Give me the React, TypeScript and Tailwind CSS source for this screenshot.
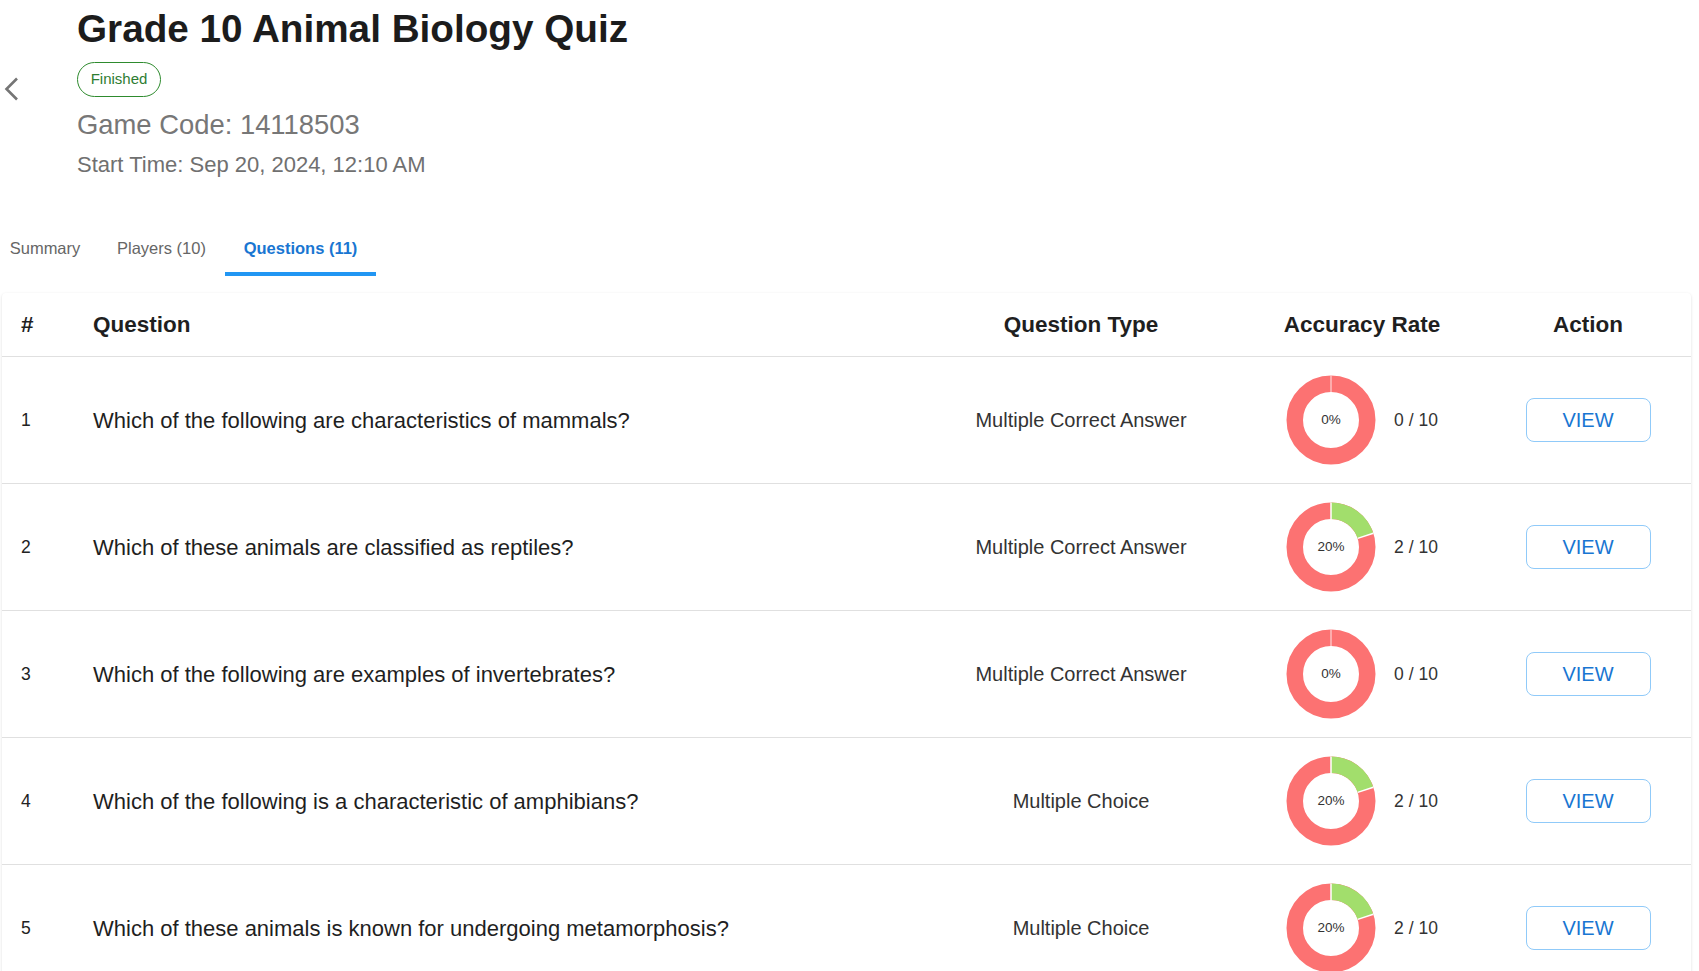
import React from "react";

type Question = {
 id: number;
 text: string;
 type: string;
 correct: number;
 total: number;
};

const questions: Question[] = [
 { id: 1, text: "Which of the following are characteristics of mammals?", type: "Multiple Correct Answer", correct: 0, total: 10 },
 { id: 2, text: "Which of these animals are classified as reptiles?", type: "Multiple Correct Answer", correct: 2, total: 10 },
 { id: 3, text: "Which of the following are examples of invertebrates?", type: "Multiple Correct Answer", correct: 0, total: 10 },
 { id: 4, text: "Which of the following is a characteristic of amphibians?", type: "Multiple Choice", correct: 2, total: 10 },
 { id: 5, text: "Which of these animals is known for undergoing metamorphosis?", type: "Multiple Choice", correct: 2, total: 10 },
];

function Donut({ pct }: { pct: number }) {
 const r = 36.25;
 const c = 2 * Math.PI * r;
 const angle = (pct / 100) * 2 * Math.PI;
 const inner = 28;
 const outer = 44.5;
 const sep = (a: number) => ({
  x1: 45 + inner * Math.sin(a),
  y1: 45 - inner * Math.cos(a),
  x2: 45 + outer * Math.sin(a),
  y2: 45 - outer * Math.cos(a),
 });
 return (
  <div className="relative h-[90px] w-[90px]">
   <svg width="90" height="90" viewBox="0 0 90 90">
    <circle cx="45" cy="45" r={r} fill="none" stroke="#fc7272" strokeWidth="16.5" />
    {pct > 0 && (
     <circle
      cx="45"
      cy="45"
      r={r}
      fill="none"
      stroke="#a2de6c"
      strokeWidth="16.5"
      strokeDasharray={`${(c * pct) / 100} ${c}`}
      transform="rotate(-90 45 45)"
     />
    )}
    <line {...sep(0)} stroke="#ffffff" strokeOpacity={pct > 0 ? 1 : 0.55} strokeWidth="1.5" />
    {pct > 0 && <line {...sep(angle)} stroke="#ffffff" strokeWidth="1.5" />}
   </svg>
   <span className="absolute inset-0 flex items-center justify-center text-[13.5px] text-[#333]">
    {pct}%
   </span>
  </div>
 );
}

function Row({ q }: { q: Question }) {
 const pct = Math.round((q.correct / q.total) * 100);
 return (
  <div className="grid h-[127px] grid-cols-[91px_862px_252px_310px_142px] items-center border-b border-[#e0e0e0] pr-[32px]">
   <div className="pl-[19px] text-[17.5px] text-[#222]">{q.id}</div>
   <div className="text-[22px] text-[#1f1f1f]">{q.text}</div>
   <div className="text-center text-[20px] text-[#333]">{q.type}</div>
   <div className="flex items-center justify-center gap-[18px]">
    <Donut pct={pct} />
    <span className="text-[17.5px] text-[#333]">
     {q.correct} / {q.total}
    </span>
   </div>
   <div className="flex justify-center">
    <button className="h-[44px] w-[125px] rounded-[8px] border border-[#90caf9] text-[20px] text-[#1976d2]">
     VIEW
    </button>
   </div>
  </div>
 );
}

export default function App() {
 return (
  <div className="min-h-screen bg-white font-['Liberation_Sans',Arial,sans-serif]">
   <div className="flex">
    <div className="w-[77px] shrink-0 pl-[4px] pt-[77px]">
     <svg width="15" height="24" viewBox="0 0 15 24" fill="none">
      <path d="M13 1.5 L2.5 12 L13 22.5" stroke="#757575" strokeWidth="2.6" />
     </svg>
    </div>
    <div className="pt-[7px]">
     <h1 className="text-[38.7px] font-bold leading-[44px] text-[#1c1c1c]">
      Grade 10 Animal Biology Quiz
     </h1>
     <div className="mt-[11px]">
      <span className="inline-flex h-[35px] w-[84px] items-center justify-center rounded-full border border-[#2e8b2e] text-[15px] text-[#2e7d32]">
       Finished
      </span>
     </div>
     <p className="mt-[12px] text-[27.4px] leading-[32px] text-[#777]">Game Code: 14118503</p>
     <p className="mt-[11px] text-[22px] leading-[26px] text-[#707070]">
      Start Time: Sep 20, 2024, 12:10 AM
     </p>
    </div>
   </div>

   <div className="mt-[47px] flex h-[51px] text-[16.5px]">
    <div className="flex w-[90px] items-center justify-center pb-[4px] text-[#666]">Summary</div>
    <div className="flex w-[135px] items-center justify-center pb-[4px] pl-[8px] text-[#666]">
     Players (10)
    </div>
    <div className="relative flex w-[151px] items-center justify-center pb-[4px] font-bold text-[#1976d2]">
     Questions (11)
     <span className="absolute bottom-0 left-0 h-[4px] w-full bg-[#2196f3]" />
    </div>
   </div>

   <div className="ml-[2px] mt-[17px] w-[1689px] rounded-[4px] bg-white shadow-[0_1px_3px_rgba(0,0,0,0.14)]">
    <div className="grid h-[64px] grid-cols-[91px_862px_252px_310px_142px] items-center border-b border-[#e0e0e0] pr-[32px] text-[22.5px] font-bold text-[#1f1f1f]">
     <div className="pl-[19px]">#</div>
     <div>Question</div>
     <div className="text-center">Question Type</div>
     <div className="text-center">Accuracy Rate</div>
     <div className="text-center">Action</div>
    </div>
    {questions.map((q) => (
     <Row q={q} key={q.id} />
    ))}
   </div>
  </div>
 );
}
